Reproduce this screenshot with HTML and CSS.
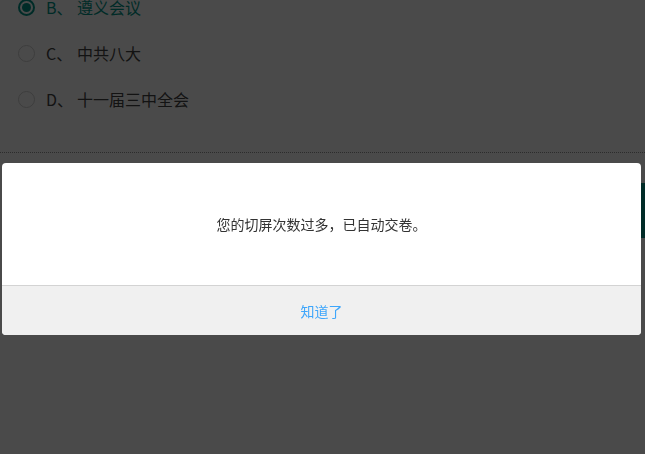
FILE: index.html
```html
<!DOCTYPE html>
<html lang="zh-CN">
<head>
    <meta charset="UTF-8">
    <meta name="viewport" content="width=device-width, initial-scale=1.0">
    <title>在线考试</title>
    <link rel="stylesheet" href="styles.css">
</head>
<body>
    <div class="exam">
        <ul class="options">
            <li class="option checked"><span class="radio"></span><span class="label">B、</span><span>遵义会议</span></li>
            <li class="option"><span class="radio"></span><span class="label">C、</span><span>中共八大</span></li>
            <li class="option"><span class="radio"></span><span class="label">D、</span><span>十一届三中全会</span></li>
        </ul>
        <div class="divider"></div>
        <div class="actions">
            <div class="submit-bar"></div>
        </div>
    </div>

    <!-- 切屏提示弹窗 -->
    <div class="mask"></div>
    <div class="dialog">
        <div class="dialog-body">您的切屏次数过多，已自动交卷。</div>
        <div class="dialog-footer">知道了</div>
    </div>
</body>
</html>
```

FILE: styles.css
```css
* {
    box-sizing: border-box;
}

body {
    margin: 0;
    background: #fff;
    font-family: "Microsoft YaHei", "Noto Sans CJK SC", sans-serif;
    color: #444;
    overflow: hidden;
}

/* 题目选项 */
.options {
    list-style: none;
    margin: -16px 0 0;
    padding: 0 0 0 18px;
}

.option {
    height: 46px;
    display: flex;
    align-items: center;
    font-size: 16px;
}

.radio {
    width: 17px;
    height: 17px;
    border: 1px solid #d2d2d2;
    border-radius: 50%;
    margin-right: 11px;
    display: flex;
    align-items: center;
    justify-content: center;
}

.label {
    width: 31px;
}

.option.checked {
    color: #009688;
}

.option.checked .radio {
    border: 2px solid #009688;
}

.option.checked .radio::after {
    content: "";
    width: 9px;
    height: 9px;
    border-radius: 50%;
    background: #009688;
}

.divider {
    margin-top: 30px;
    border-top: 1px dotted #999;
}

.actions {
    display: flex;
    justify-content: flex-end;
    padding-top: 30px;
}

/* 交卷按钮，右侧露出一点 */
.submit-bar {
    width: 90px;
    height: 55px;
    margin-right: -86px;
    background: #009688;
}

/* 遮罩和弹窗 */
.mask {
    position: fixed;
    inset: 0;
    background: rgba(0, 0, 0, 0.71);
}

.dialog {
    position: fixed;
    left: 2px;
    top: 163px;
    width: 639px;
    border-radius: 4px;
    overflow: hidden;
    background: #fff;
}

.dialog-body {
    height: 122px;
    display: flex;
    align-items: center;
    justify-content: center;
    font-size: 14px;
    color: #333;
}

.dialog-footer {
    height: 50px;
    border-top: 1px solid #d3d3d3;
    background: #f0f0f0;
    display: flex;
    align-items: center;
    justify-content: center;
    font-size: 14px;
    color: #3ea6fb;
}
```
